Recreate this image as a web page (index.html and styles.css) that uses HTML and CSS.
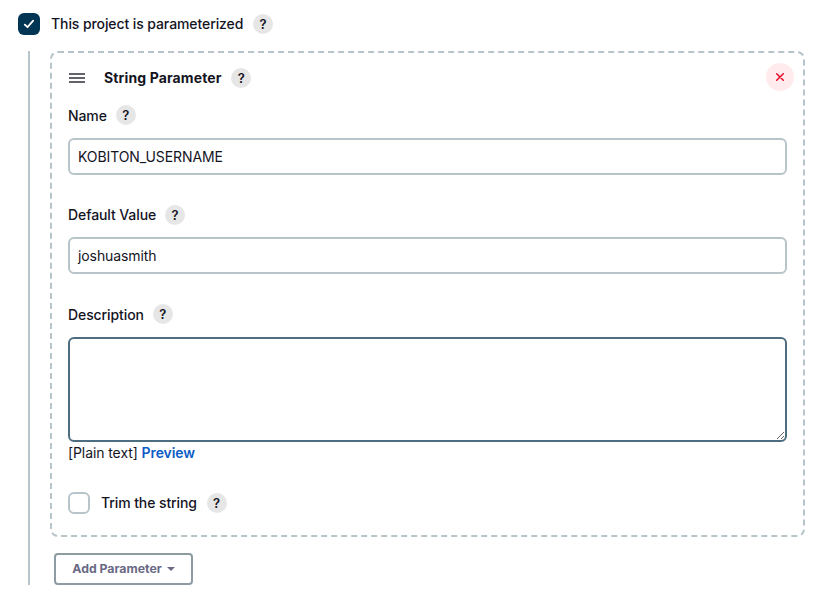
FILE: index.html
```html
<!DOCTYPE html>
<html lang="en">
<head>
<meta charset="utf-8">
<title>Project parameters</title>
<link rel="stylesheet" href="styles.css">
</head>
<body>
<main class="page">
  <div class="row toggle">
    <span class="check checked"><svg width="22" height="22" viewBox="0 0 22 22"><path d="M6.8 11.6l2.7 2.6 5.7-6.5" fill="none" stroke="#fff" stroke-width="1.8" stroke-linecap="round" stroke-linejoin="round"/></svg></span>
    <span class="label">This project is parameterized</span><span class="help">?</span>
  </div>
  <section class="nested">
    <div class="card">
      <header class="row head">
        <svg class="grip" width="16" height="10" viewBox="0 0 16 10"><path d="M0 1h16M0 5h16M0 9h16" stroke="#30303c" stroke-width="1.5"/></svg>
        <span class="title">String Parameter</span><span class="help">?</span>
        <button class="remove" aria-label="Delete"><svg width="28" height="28" viewBox="0 0 28 28"><path d="M10.7 10.7l6.6 6.6m0-6.6l-6.6 6.6" fill="none" stroke="#e6001f" stroke-width="1.4" stroke-linecap="round"/></svg></button>
      </header>
      <div class="row field name"><span class="label">Name</span><span class="help">?</span></div>
      <div class="input">KOBITON_USERNAME</div>
      <div class="row field default"><span class="label">Default Value</span><span class="help">?</span></div>
      <div class="input">joshuasmith</div>
      <div class="row field desc"><span class="label">Description</span><span class="help">?</span></div>
      <textarea class="area" aria-label="Description"></textarea>
      <div class="format">[Plain text] <a class="preview">Preview</a></div>
      <div class="row trim"><span class="check"></span><span class="label">Trim the string</span><span class="help">?</span></div>
    </div>
    <button class="add">Add Parameter<svg width="8" height="4" viewBox="0 0 8 4"><path d="M0 0h8L4 4z" fill="#6a6a84"/></svg></button>
  </section>
</main>
</body>
</html>
```
FILE: styles.css
```css
* { box-sizing: border-box; }
body { margin: 0; background: #fff; color: #14141f; font: 14px/20px Inter, sans-serif; letter-spacing: -0.09px; }
.page { padding: 13px 19px 0 18px; }
.row { display: flex; align-items: center; }
.toggle { height: 22px; }
.check { width: 22px; height: 22px; flex: none; border: 2px solid #b7c4c9; border-radius: 6px; margin-right: 11px; }
.checked { border: 0; background: #003553; }
.checked svg { display: block; }
.label { font-weight: 450; }
.help { width: 20px; height: 20px; margin-left: 9.7px; border-radius: 50%; background: #e6e6e6; text-align: center; font-size: 13px; font-weight: 600; letter-spacing: 0; }
.nested { margin: 16px 0 0 10px; padding-left: 20px; border-left: 2px solid #b7c4c9; height: 534px; }
.card { height: 486px; border: 2px dashed #b7c4c9; border-radius: 8px; padding: 10px 16px 0; }
.head { height: 28px; }
.grip { margin: 2px 19px 0 1px; }
.title { font-weight: 700; letter-spacing: 0.13px; padding-top: 1px; }
.head .help { margin-top: 1px; }
.remove { width: 28px; height: 28px; margin: 0 -7px 0 auto; border: 0; border-radius: 50%; padding: 0; background: #ffebed; }
.remove svg { display: block; }
.field { height: 20px; }
.field .label { padding-top: 1px; }
.field .help { margin-left: 9px; }
.name { margin: 14px 0 13px; }
.default { margin: 30px 0 12px; }
.default .label { padding-top: 0; }
.desc { margin: 30px 0 13px; }
.input { height: 37px; border: 2px solid #b7c4c9; border-radius: 6px; padding: 7px 8px; }
.area { display: block; width: 100%; height: 105px; border: 2px solid #4d6e80; border-radius: 6px; background: #fff; }
.format { margin-top: 1px; }
.preview { color: #0b5cc7; font-weight: 600; }
.trim { margin-top: 29px; height: 22px; }
.add { display: flex; align-items: center; justify-content: center; width: 139px; height: 32px; margin: 16px 0 0 4px; border: 2px solid #8d9ba3; border-radius: 4px; background: #fff; color: #6a6a84; font: 700 12.3px/20px Inter, sans-serif; gap: 5px; padding: 0; }
```
